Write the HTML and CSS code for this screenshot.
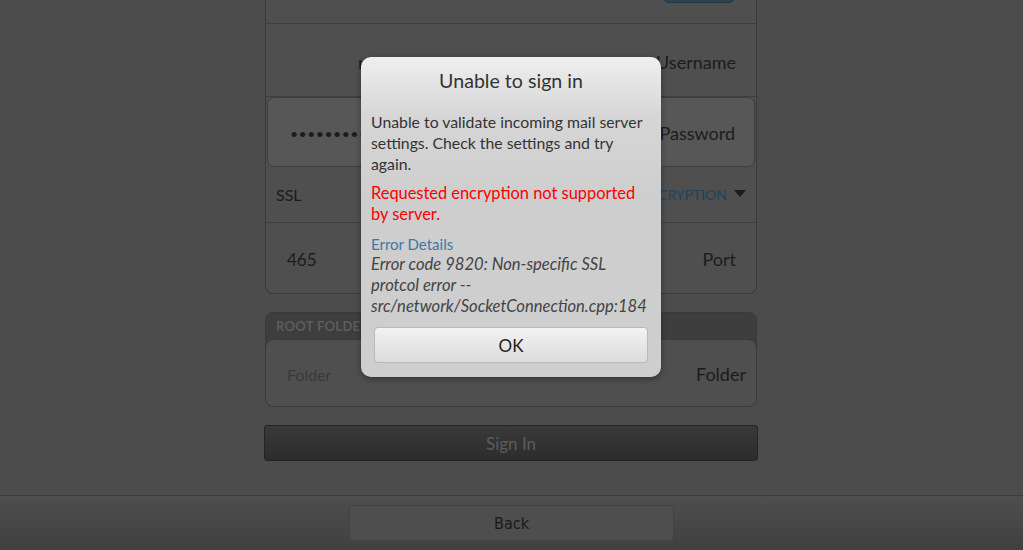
FILE: index.html
```html
<!DOCTYPE html>
<html>
<head>
<meta charset="utf-8">
<link rel="stylesheet" href="styles.css">
</head>
<body>
<div class="screen">
  <div class="col">
    <div class="group first">
      <div class="row top"><span class="toggle"></span></div>
      <div class="row username"><span class="value user-val">n@gmail.com</span><span class="label">Username</span></div>
      <div class="row password"><span class="value dots">••••••••••••••••••</span><span class="label">Password</span></div>
      <div class="row ssl"><span class="value small">SSL</span><span class="enc">ENCRYPTION <span class="caret"></span></span></div>
      <div class="row port"><span class="value">465</span><span class="label">Port</span></div>
    </div>
    <div class="group second">
      <div class="ghead">ROOT FOLDER</div>
      <div class="row folder"><span class="value hint">Folder</span><span class="label">Folder</span></div>
    </div>
    <div class="signin">Sign In</div>
  </div>
</div>
<div class="footer"><div class="back">Back</div></div>

<div class="dialog">
  <div class="dtitle">Unable to sign in</div>
  <p class="dmsg">Unable to validate incoming mail server settings. Check the settings and try again.</p>
  <p class="derr">Requested encryption not supported by server.</p>
  <div class="dlink">Error Details</div>
  <p class="ddet">Error code 9820: Non-specific SSL protcol error -- src/network/SocketConnection.cpp:184</p>
  <div class="ok">OK</div>
</div>
</body>
</html>
```
FILE: styles.css
```css
* { box-sizing: border-box; }
html, body { margin: 0; padding: 0; }
body {
  width: 1023px;
  height: 550px;
  overflow: hidden;
  background: #4c4c4c;
  font-family: Lato, "Open Sans", sans-serif;
  color: #1c1c1c;
  position: relative;
}
.screen { height: 495px; }
.col { width: 492px; margin: 0 0 0 265px; }
.group {
  border: 1px solid #3a3a3a;
  border-radius: 8px;
  background: #4f4f4f;
}
.group.first { border-top: none; border-radius: 0 0 8px 8px; }
.row {
  display: flex;
  align-items: center;
  justify-content: space-between;
  padding: 0 20px 0 21px;
  font-size: 18px;
  border-bottom: 1px solid #3e3e3e;
}
.row .label { color: #1c1c1c; }
.value { white-space: nowrap; overflow: hidden; }
.top { height: 24px; position: relative; }
.toggle {
  position: absolute;
  right: 21px;
  top: -6px;
  width: 72px;
  height: 9px;
  border-radius: 0 0 6px 6px;
  background: #2c4352;
  border: 1px solid #243542;
}
.username { height: 73px; padding-top: 4px; }
.user-val { margin-left: 71px; width: 4px; margin-right: auto; }
.password {
  height: 70px;
  margin: 0 1px;
  background: #575757;
  border: 1px solid #3e3e3e;
  border-radius: 7px;
  padding-top: 2px;
  padding-right: 19px;
}
.dots { letter-spacing: 0.5px; font-size: 14px; margin-left: 1px; width: 73px; margin-right: auto; }
.ssl { height: 56px; padding-left: 10px; padding-right: 10px; }
.small { font-size: 16px; }
.enc { color: #1f425c; font-size: 14px; display: flex; align-items: center; gap: 7px; }
.caret {
  width: 0; height: 0;
  border-left: 6px solid transparent;
  border-right: 6px solid transparent;
  border-top: 7px solid #1c1c1c;
  margin-top: -2px;
}
.port { height: 70px; border-bottom: none; padding-top: 2px; font-size: 17px; }
.port .label { font-size: 18px; }
.second { margin-top: 18px; background: #3e3e3e; overflow: hidden; }
.ghead {
  height: 26px;
  padding-left: 10px;
  display: flex;
  align-items: center;
  font-size: 13px;
  font-weight: bold;
  color: #5c5c5c;
  letter-spacing: 0.3px;
}
.folder {
  height: 67px;
  background: #4f4f4f;
  border: none;
  border-top: 1px solid #3a3a3a;
  border-radius: 8px 8px 0 0;
  padding-top: 2px;
  padding-right: 10px;
  font-size: 18px;
}
.hint { color: #3a3a3a; font-size: 16px; }
.signin {
  margin: 18px -1px 0 -1px;
  height: 36px;
  border: 1px solid #242424;
  border-radius: 3px;
  background: linear-gradient(#3a3a3a, #2c2c2c);
  color: #5c5c5c;
  font-size: 17px;
  display: flex;
  align-items: center;
  justify-content: center;
}
.footer {
  height: 55px;
  border-top: 1px solid #3c3c3c;
  background: linear-gradient(#4e4e4e, #404040);
  display: flex;
  justify-content: center;
  padding-top: 9px;
}
.back {
  width: 325px;
  height: 36px;
  border: 1px solid #434343;
  border-radius: 4px;
  background: #4e4e4e;
  display: flex;
  align-items: center;
  justify-content: center;
  font-size: 16px;
  color: #1a1a1a;
  font-family: "DejaVu Sans Condensed", "DejaVu Sans", sans-serif;
}

.dialog {
  position: absolute;
  left: 361px;
  top: 57px;
  width: 300px;
  height: 320px;
  border-radius: 10px;
  background: linear-gradient(#efefef 0px, #d6d6d6 60px, #cecece 140px, #cecece);
  box-shadow: 0 2px 6px rgba(0,0,0,0.35);
  padding: 0 10px 0 10px;
  color: #333;
}
.dtitle {
  text-align: center;
  font-size: 19.6px;
  line-height: 24px;
  padding-top: 12px;
  color: #333;
}
.dialog p { margin: 0; }
.dmsg {
  margin-top: 18px !important;
  font-size: 15.8px;
  line-height: 21px;
}
.derr {
  margin-top: 8px !important;
  font-size: 16.4px;
  line-height: 21px;
  color: #fa0000;
}
.dlink {
  margin-top: 10px;
  font-size: 15px;
  line-height: 20px;
  color: #3d77a8;
}
.ddet {
  font-size: 16.6px;
  line-height: 21px;
  font-style: italic;
  color: #444;
}
.ok {
  margin: 10px 3px 0 3px;
  height: 36px;
  border: 1px solid #b9b9b9;
  border-radius: 4px;
  background: linear-gradient(#f2f2f2, #dcdcdc);
  display: flex;
  align-items: center;
  justify-content: center;
  font-size: 17px;
  color: #222;
}
```
